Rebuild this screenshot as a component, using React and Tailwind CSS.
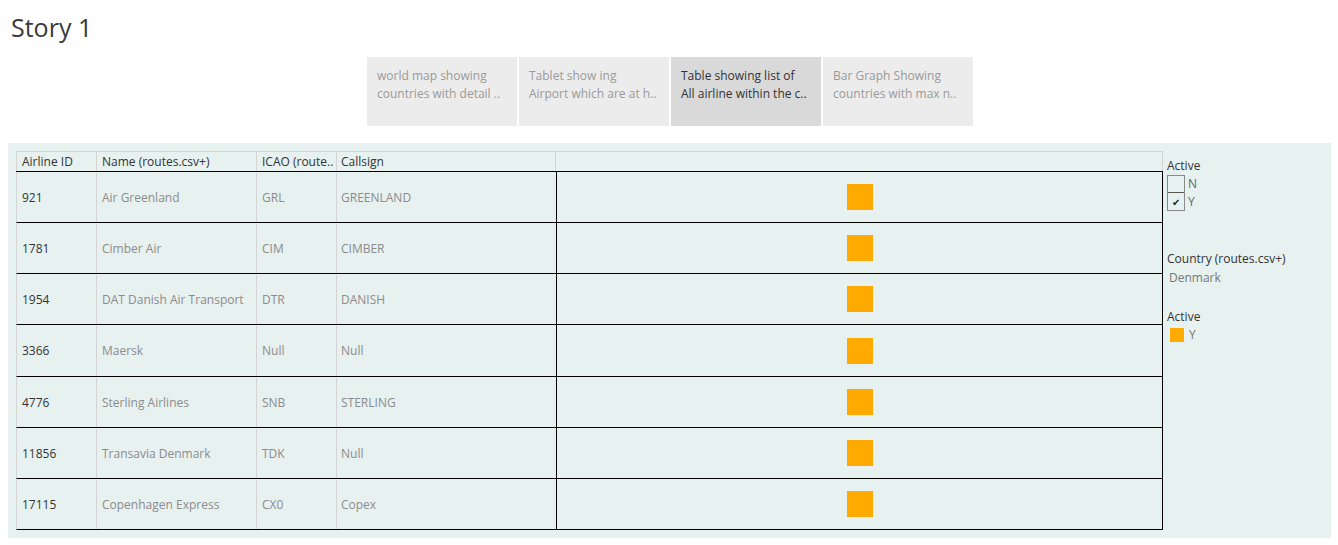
import React from 'react';

const font = { fontFamily: '"Open Sans", "Noto Sans", sans-serif' };

const tabs = [
  { l1: 'world map showing', l2: 'countries with detail ..', active: false },
  { l1: 'Tablet show ing', l2: 'Airport which are at h..', active: false },
  { l1: 'Table showing list  of', l2: 'All airline within the c..', active: true },
  { l1: 'Bar Graph Showing', l2: 'countries with max n..', active: false },
];

const rows = [
  ['921', 'Air Greenland', 'GRL', 'GREENLAND'],
  ['1781', 'Cimber Air', 'CIM', 'CIMBER'],
  ['1954', 'DAT Danish Air Transport', 'DTR', 'DANISH'],
  ['3366', 'Maersk', 'Null', 'Null'],
  ['4776', 'Sterling Airlines', 'SNB', 'STERLING'],
  ['11856', 'Transavia Denmark', 'TDK', 'Null'],
  ['17115', 'Copenhagen Express', 'CX0', 'Copex'],
];

export default function App() {
  return (
    <div className="w-[1338px] h-[545px] bg-white overflow-hidden" style={font}>
      {/* story title */}
      <div className="pl-[11px] pt-[12px] text-[25px] leading-[30px] text-[#3a3a3a]">Story 1</div>

      {/* story points */}
      <div className="flex justify-center gap-[2px] mt-[15px] pl-[2px]">
        {tabs.map((t, i) => (
          <div
            key={i}
            className={`w-[150px] h-[69px] pl-[10px] pt-[10px] text-[12px] leading-[18px] whitespace-nowrap overflow-hidden ${
              t.active ? 'bg-[#d9d9d9] text-[#333333]' : 'bg-[#ececec] text-[#9a9a9a]'
            }`}
          >
            <div>{t.l1}</div>
            <div>{t.l2}</div>
          </div>
        ))}
      </div>

      {/* dashboard */}
      <div className="ml-[8px] mt-[17px] w-[1323px] h-[395px] bg-[#e7f1f0] pt-[8px] pl-[8px] flex">
        <div className="w-[1147px] text-[12px]">
          {/* header */}
          <div className="flex h-[20px] border-t border-l border-[#d4d4d4] text-[#333333] leading-[20px]">
            <div className="w-[80px] pl-[5px] border-r border-[#d4d4d4]">Airline ID</div>
            <div className="w-[160px] pl-[5px] border-r border-[#d4d4d4]">Name (routes.csv+)</div>
            <div className="w-[80px] pl-[5px] border-r border-[#d4d4d4] whitespace-nowrap overflow-hidden">ICAO (route..</div>
            <div className="w-[219px] pl-[4px] border-r border-[#d4d4d4]">Callsign</div>
            <div className="flex-1 border-r border-[#d4d4d4]"></div>
          </div>
          <div className="border-t border-black">
            {rows.map((r, i) => (
              <div
                key={i}
                className={`flex ${i === 3 ? 'h-[52px]' : 'h-[51px]'} pt-[1px] border-b border-black border-l border-l-[#d4d4d4]`}
              >
                <div className="w-[80px] pl-[5px] border-r border-[#d4d4d4] flex items-center text-[#333333]">{r[0]}</div>
                <div className="w-[160px] pl-[5px] border-r border-[#d4d4d4] flex items-center text-[#8c8c8c]">{r[1]}</div>
                <div className="w-[80px] pl-[5px] border-r border-[#d4d4d4] flex items-center text-[#8c8c8c]">{r[2]}</div>
                <div className="w-[219px] pl-[4px] flex items-center text-[#8c8c8c]">{r[3]}</div>
                <div className="flex-1 -mt-[1px] border-l border-r border-black flex items-center justify-center">
                  <div className="w-[26px] h-[26px] bg-[#ffaa00]"></div>
                </div>
              </div>
            ))}
          </div>
        </div>

        {/* legends */}
        <div className="pl-[4px] pt-[6px] text-[12px] leading-[18px]">
          <div className="text-[#333333]">Active</div>
          <div className="flex">
            <div className="w-[18px] border border-[#8a8a8a]">
              <div className="h-[17px] border-b border-[#555555]"></div>
              <div className="h-[17px] flex items-center justify-center text-[10px] text-[#222222]">✔</div>
            </div>
            <div className="pl-[3px] text-[#666666]">
              <div className="h-[18px]">N</div>
              <div className="h-[18px]">Y</div>
            </div>
          </div>
          <div className="mt-[39px] text-[#333333]">Country (routes.csv+)</div>
          <div className="pl-[2px] mt-[1px] text-[#777777]">Denmark</div>
          <div className="mt-[21px] text-[#333333]">Active</div>
          <div className="flex items-center pl-[3px] h-[18px]">
            <div className="w-[14px] h-[14px] bg-[#ffaa00]"></div>
            <div className="pl-[5px] text-[#777777]">Y</div>
          </div>
        </div>
      </div>
    </div>
  );
}
